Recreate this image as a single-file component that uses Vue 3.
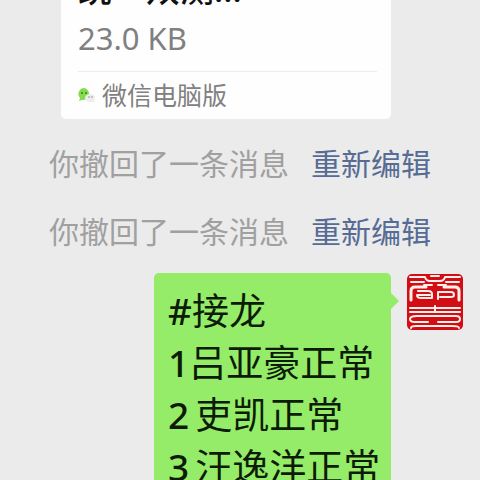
<template>
  <main class="chat">
    <a class="file-card" href="#file">
      <div class="file-name">统一双测...</div>
      <div class="file-size">23.0 KB</div>
      <div class="file-source">
        <svg class="source-icon" viewBox="0 0 18 16" aria-hidden="true">
          <path d="M6 0a6 6 0 0 0-4 10l-1 3 3-1a6 6 0 1 0 2-12z" fill="#83dc4d" />
          <ellipse cx="12" cy="10" rx="5" ry="4" fill="#ededed" />
          <path d="M14 13l3 2-1-3z" fill="#ededed" />
          <circle cx="4" cy="5" r="1" fill="#3f7d2c" />
          <circle cx="8" cy="5" r="1" fill="#3f7d2c" />
          <circle cx="11" cy="9" r="1" fill="#b5b5b5" />
          <circle cx="14" cy="9" r="1" fill="#b5b5b5" />
        </svg>
        <span>微信电脑版</span>
      </div>
    </a>

    <p v-for="notice in notices" :key="notice.id" class="notice">
      <span>{{ notice.text }}</span>
      <button type="button" class="notice-edit">{{ notice.action }}</button>
    </p>

    <section class="message">
      <div class="bubble">
        <div v-for="line in lines" :key="line.text" class="bubble-line">
          <span class="mark" :class="{ spaced: line.spaced }">{{ line.mark }}</span>
          <span>{{ line.text }}</span>
        </div>
      </div>
      <svg class="avatar" viewBox="0 0 58 58" aria-hidden="true">
        <rect x="1" y="1" width="56" height="56" rx="5" fill="#d20d14" />
        <g fill="none" stroke="#fbefec" stroke-width="3" stroke-linecap="round" stroke-linejoin="round">
          <path d="M4 4H19Q20 8 24 8H34Q38 8 39 4H54M25 3H33" stroke-width="2" />
          <path d="M5 9H18M40 9H53M18 12H26M32 12H40" stroke-width="2" />
          <path d="M5 27V18Q5 14 9 14H20M53 27V18Q53 14 49 14H38" />
          <path d="M12 18H22Q26 18 26 21V25H15Q11 25 11 22H24" stroke-width="2" />
          <path d="M32 26V19H45Q48 19 48 22Q48 24 45 24H34" stroke-width="2" />
          <path d="M4 35H54M29 33V38M4 39H54" stroke-width="2" />
          <path d="M11 43H50Q54 43 54 46M11 43Q4 43 4 46Q4 49 9 49H22M32 49H50Q54 49 54 46" stroke-width="2" />
          <path d="M5 55Q5 53 10 53H46Q53 53 53 55" stroke-width="2" />
        </g>
      </svg>
    </section>
  </main>
</template>

<script setup>
const notices = [
  { id: 1, text: '你撤回了一条消息', action: '重新编辑' },
  { id: 2, text: '你撤回了一条消息', action: '重新编辑' }
]

const lines = [
  { mark: '#', text: '接龙', spaced: false },
  { mark: '1', text: '吕亚豪正常', spaced: false },
  { mark: '2', text: '吏凯正常', spaced: true },
  { mark: '3', text: '汪逸洋正常', spaced: true }
]
</script>

<style>
body {
  background: #ebebeb;
}
</style>

<style scoped>
.chat {
  box-sizing: border-box;
  height: 100vh;
  overflow: hidden;
  font-family: "Noto Sans", "Noto Sans CJK SC", sans-serif;
}

.file-card {
  display: block;
  margin: 0 89px 0 61px;
  padding: 0 14px 0 17px;
  border-radius: 0 0 5px 5px;
  background: #fefefe;
  color: #808080;
  text-decoration: none;
}

/* The name is scrolled past the top edge */
.file-name {
  display: flex;
  align-items: flex-end;
  height: 16px;
  overflow: hidden;
  color: #111;
  font-size: 34px;
  font-weight: 500;
  line-height: 54px;
}

.file-size {
  height: 55px;
  font-size: 31px;
  line-height: 44px;
}

.file-source {
  display: flex;
  align-items: center;
  gap: 6px;
  height: 47px;
  border-top: 1px solid #ededed;
  font-size: 25px;
  line-height: 47px;
}

.source-icon {
  width: 18px;
  height: 16px;
}

.notice {
  display: flex;
  justify-content: center;
  gap: 22px;
  margin: 22px 0 0;
  color: #a0a0a0;
  font-size: 30px;
  line-height: 46px;
}

.notice-edit {
  padding: 0;
  border: 0;
  background: none;
  color: #576b95;
  font: inherit;
  cursor: pointer;
}

.message {
  display: flex;
  justify-content: flex-end;
  align-items: flex-start;
  gap: 15px;
  margin-top: 18px;
  padding-right: 16px;
}

.bubble {
  position: relative;
  box-sizing: border-box;
  width: 237px;
  padding: 12px 0 16px 14px;
  border-radius: 5px;
  background: #95ec69;
  color: #0c1c07;
  font-size: 37px;
  line-height: 52px;
}

.bubble::after {
  content: "";
  position: absolute;
  top: 20px;
  left: 100%;
  border: 8px solid transparent;
  border-right-width: 0;
  border-left-color: #95ec69;
}

.bubble-line {
  display: flex;
  white-space: nowrap;
}

.mark {
  font-weight: 500;
}

.spaced {
  margin-right: 6px;
}

.avatar {
  flex: none;
  width: 58px;
  height: 58px;
}
</style>
